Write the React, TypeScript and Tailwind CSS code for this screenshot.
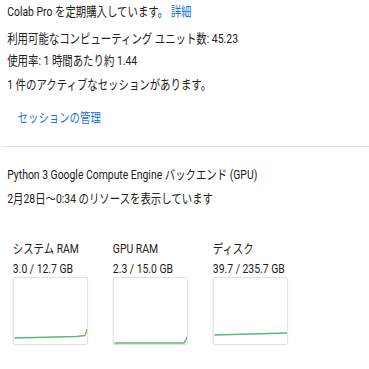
const font = { fontFamily: 'Roboto, "Noto Sans CJK JP", sans-serif' };

const charts = [
  { name: 'システム RAM', value: '3.0 / 12.7 GB', line: 'M1 60 L80 58.5 L91 57.5 L94 51' },
  { name: 'GPU RAM', value: '2.3 / 15.0 GB', line: 'M1 65 L90 65 L94 59' },
  { name: 'ディスク', value: '39.7 / 235.7 GB', line: 'M1 57 L94 55' },
];

function Chart({ name, value, line }: { name: string; value: string; line: string }) {
  return (
    <div className="flex flex-col w-[94px]">
      <div className="text-[13px] leading-[20px] text-[#212121]">{name}</div>
      <div className="text-[13px] leading-[20px] text-[#212121]">{value}</div>
      <div className="h-[68px] border border-[#dadce0] mt-[-2px] rounded-[2px] bg-white">
        <svg width="100%" height="100%" viewBox="0 0 94 66" preserveAspectRatio="none">
          <path d={line} fill="none" stroke="#5bb974" strokeWidth="1.6" />
        </svg>
      </div>
    </div>
  );
}

export default function App() {
  return (
    <div className="w-[369px] h-[369px] overflow-hidden bg-white">
      <div className="w-[462px] origin-top-left scale-x-[0.8] text-[#212121] text-[13px]" style={font}>
        <div className="pl-[9px] pt-[2px]">
          <div className="leading-[20px]">
            Colab Pro を定期購入しています。 <span className="text-[#1a73e8]">詳細</span>
          </div>
          <div className="leading-[22px] mt-[6px]">利用可能なコンピューティング ユニット数: 45.23</div>
          <div className="leading-[22px]">使用率: 1 時間あたり約 1.44</div>
          <div className="leading-[22px] mt-[2px]">1 件のアクティブなセッションがあります。</div>
          <div className="leading-[22px] mt-[11px] pl-[13px] text-[#1a73e8]">セッションの管理</div>
        </div>
        <div className="mt-[17px] ml-[2px] h-px bg-[#e0e0e0]" />
        <div className="pl-[9px] pt-[17px]">
          <div className="leading-[22px]">Python 3 Google Compute Engine バックエンド (GPU)</div>
          <div className="leading-[22px] mt-[2px]">2月28日～0:34 のリソースを表示しています</div>
        </div>
        <div className="flex gap-[31px] pl-[16px] mt-[29px]">
          {charts.map((c) => (
            <Chart key={c.name} {...c} />
          ))}
        </div>
      </div>
    </div>
  );
}
